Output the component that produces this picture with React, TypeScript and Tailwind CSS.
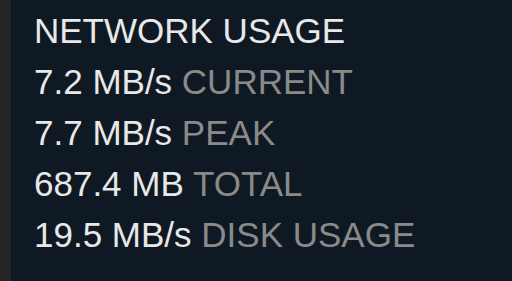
const stats = [
  { value: "7.2 MB/s", label: "CURRENT" },
  { value: "7.7 MB/s", label: "PEAK" },
  { value: "687.4 MB", label: "TOTAL" },
  { value: "19.5 MB/s", label: "DISK USAGE" },
];

export default function App() {
  return (
    <div className="flex h-[281px] w-[512px] bg-[#0f1923] font-['Liberation_Sans',Arial,sans-serif]">
      <div className="w-[11px] shrink-0 bg-[#252527]" />
      <div className="flex flex-col pl-[23px] pt-[5px] text-[35px] leading-[51px] whitespace-nowrap">
        <div className="text-[#e8e8e8]">NETWORK USAGE</div>
        {stats.map((s) => (
          <div key={s.label}>
            <span className="text-[#e8e8e8]">{s.value}</span>{" "}
            <span className="text-[#8a8a8a]">{s.label}</span>
          </div>
        ))}
      </div>
    </div>
  );
}
